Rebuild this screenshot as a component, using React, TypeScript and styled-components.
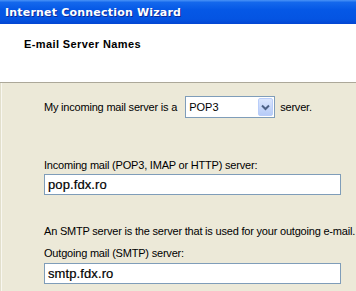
import styled, { createGlobalStyle } from "styled-components";

const Global = createGlobalStyle`
  html, body {
    margin: 0;
    padding: 0;
  }
  body {
    width: 356px;
    height: 291px;
    overflow: hidden;
    background: #ece9d8;
    font-family: "Liberation Sans", Arial, sans-serif;
  }
`;

const Window = styled.div`
  width: 356px;
  height: 291px;
  display: flex;
  flex-direction: column;
  overflow: hidden;
`;

const TitleBar = styled.div`
  height: 24px;
  flex: none;
  display: flex;
  align-items: center;
  padding-left: 5px;
  background: linear-gradient(
    to bottom,
    #4a93f7 0%,
    #1468ec 10%,
    #0558e6 40%,
    #0454e2 80%,
    #0346d2 100%
  );
  color: #fff;
  font: bold 11px "DejaVu Sans", sans-serif;
  letter-spacing: 0.2px;
  text-shadow: 1px 1px #0c2a9a;
`;

const Header = styled.div`
  flex: none;
  height: 59px;
  box-sizing: border-box;
  background: #fff;
  border-bottom: 1px solid #aca899;
  padding: 13px 0 0 24px;
`;

const Heading = styled.div`
  font-size: 11px;
  font-weight: bold;
  letter-spacing: 0.4px;
  color: #000;
  line-height: 14px;
`;

const Content = styled.div`
  flex: 1;
  display: flex;
  flex-direction: column;
  padding: 13px 0 0 44px;
  box-shadow: inset 1px 0 #e2dfcc, inset 2px 0 #f8f7f0;
  font-size: 11px;
  letter-spacing: -0.2px;
  color: #000;
`;

const Row = styled.div`
  display: flex;
  align-items: center;
  height: 22px;
  white-space: nowrap;
`;

const Select = styled.div`
  width: 90px;
  height: 22px;
  box-sizing: border-box;
  margin: 0 5px 0 8px;
  border: 1px solid #7f9db9;
  background: #fff;
  display: flex;
  align-items: center;
  padding: 1px 1px 1px 3px;
`;

const SelectValue = styled.span`
  flex: 1;
  letter-spacing: 0;
`;

const DropButton = styled.div`
  width: 15px;
  height: 18px;
  box-sizing: border-box;
  border: 1px solid #b9cdf9;
  border-radius: 2px;
  background: linear-gradient(to bottom, #dbe6fd, #b6cbf7);
  display: flex;
  align-items: center;
  justify-content: center;
`;

const Label = styled.div<{ $top: number }>`
  margin-top: ${(p) => p.$top}px;
  line-height: 14px;
  white-space: nowrap;
`;

const Field = styled.div<{ $top: number }>`
  margin-top: ${(p) => p.$top}px;
  width: 297px;
  height: 21px;
  box-sizing: border-box;
  border: 1px solid #7f9db9;
  background: #fff;
  padding-left: 3px;
  display: flex;
  align-items: center;
  font-size: 13px;
  letter-spacing: 0.1px;
  -webkit-text-stroke: 0.2px #000;
`;

function Chevron() {
  return (
    <svg width="9" height="7" viewBox="0 0 9 7">
      <path
        d="M1 1.5 L4.5 5 L8 1.5"
        fill="none"
        stroke="#4d6185"
        strokeWidth="2"
      />
    </svg>
  );
}

export default function App() {
  return (
    <Window>
      <Global />
      <TitleBar>Internet Connection Wizard</TitleBar>
      <Header>
        <Heading>E-mail Server Names</Heading>
      </Header>
      <Content>
        <Row>
          My incoming mail server is a
          <Select>
            <SelectValue>POP3</SelectValue>
            <DropButton>
              <Chevron />
            </DropButton>
          </Select>
          server.
        </Row>
        <Label $top={40}>Incoming mail (POP3, IMAP or HTTP) server:</Label>
        <Field $top={2}>pop.fdx.ro</Field>
        <Label $top={29}>
          An SMTP server is the server that is used for your outgoing e-mail.
        </Label>
        <Label $top={8}>Outgoing mail (SMTP) server:</Label>
        <Field $top={3}>smtp.fdx.ro</Field>
      </Content>
    </Window>
  );
}
